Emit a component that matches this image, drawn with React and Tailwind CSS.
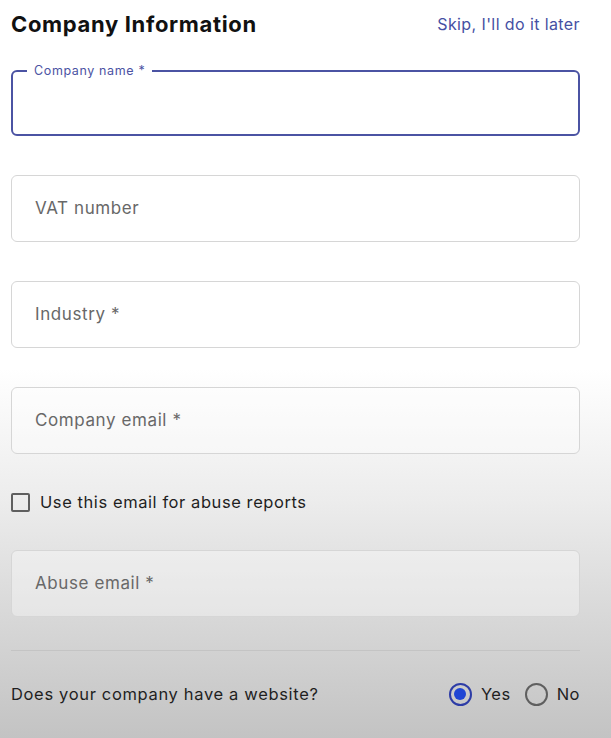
import React, { useState } from 'react';

const fields = [
  { label: 'VAT number' },
  { label: 'Industry *' },
  { label: 'Company email *' },
];

const OutlinedField = ({ label }) => (
  <div className="h-[67px] rounded-[6px] border border-[#d6d6d6] bg-white/35 flex items-center px-[23px]">
    <span className="text-[17px] text-[#686868] tracking-[0.035em]">{label}</span>
  </div>
);

const Radio = ({ checked, label, onClick }) => (
  <button type="button" onClick={onClick} className="flex items-center gap-[9px]">
    <span
      className={
        checked
          ? 'w-[23px] h-[23px] rounded-full border-2 border-[#2d3ca6] flex items-center justify-center'
          : 'w-[23px] h-[23px] rounded-full border-2 border-[#5f5f5f] flex items-center justify-center'
      }
    >
      {checked && <span className="w-[12px] h-[12px] rounded-full bg-[#1f45d4]" />}
    </span>
    <span className="text-[16.5px] text-[#1f1f1f] tracking-[0.03em]">{label}</span>
  </button>
);

const App = () => {
  const [hasWebsite, setHasWebsite] = useState(true);
  const [sameEmail, setSameEmail] = useState(false);

  return (
    <div
      className="min-h-[738px] w-full bg-linear-to-b from-white from-[50%] via-[#ececec] via-[68%] to-[#c3c3c3] pl-[11px] pr-[31px]"
      style={{ fontFamily: 'Inter, "Noto Sans", sans-serif' }}
    >
      {/* Header */}
      <div className="h-[48px] flex items-center justify-between">
        <h1 className="text-[22px] font-bold text-[#111] tracking-[0.03em]">Company Information</h1>
        <a href="#" className="text-[16px] text-[#4550a3] tracking-[0.025em]">
          Skip, I'll do it later
        </a>
      </div>

      {/* Focused field */}
      <div className="relative mt-[22px] h-[66px] rounded-[6px] border-2 border-[#4b53a3] bg-white">
        <span className="absolute -top-[10px] left-[14px] px-[7px] bg-white text-[12.5px] text-[#4b53a3] tracking-[0.05em]">
          Company name *
        </span>
      </div>

      <div className="mt-[39px] flex flex-col gap-[39px]">
        {fields.map((f) => (
          <OutlinedField key={f.label} label={f.label} />
        ))}
      </div>

      {/* Checkbox */}
      <label className="mt-[38px] h-[20px] flex items-center gap-[10px] cursor-pointer">
        <span
          onClick={() => setSameEmail(!sameEmail)}
          className="w-[19px] h-[19px] rounded-[2px] border-2 border-[#5f5f5f]"
        />
        <span className="text-[16.5px] text-[#1f1f1f] tracking-[0.035em]">Use this email for abuse reports</span>
      </label>

      <div className="mt-[38px]">
        <OutlinedField label="Abuse email *" />
      </div>

      <div className="mt-[33px] h-px bg-[#c4c4c4]" />

      {/* Website question */}
      <div className="mt-[31px] h-[24px] flex items-center justify-between">
        <span className="text-[16.5px] text-[#1f1f1f] tracking-[0.04em]">Does your company have a website?</span>
        <div className="flex items-center gap-[14px]">
          <Radio checked={hasWebsite} label="Yes" onClick={() => setHasWebsite(true)} />
          <Radio checked={!hasWebsite} label="No" onClick={() => setHasWebsite(false)} />
        </div>
      </div>
    </div>
  );
};

export default App;
